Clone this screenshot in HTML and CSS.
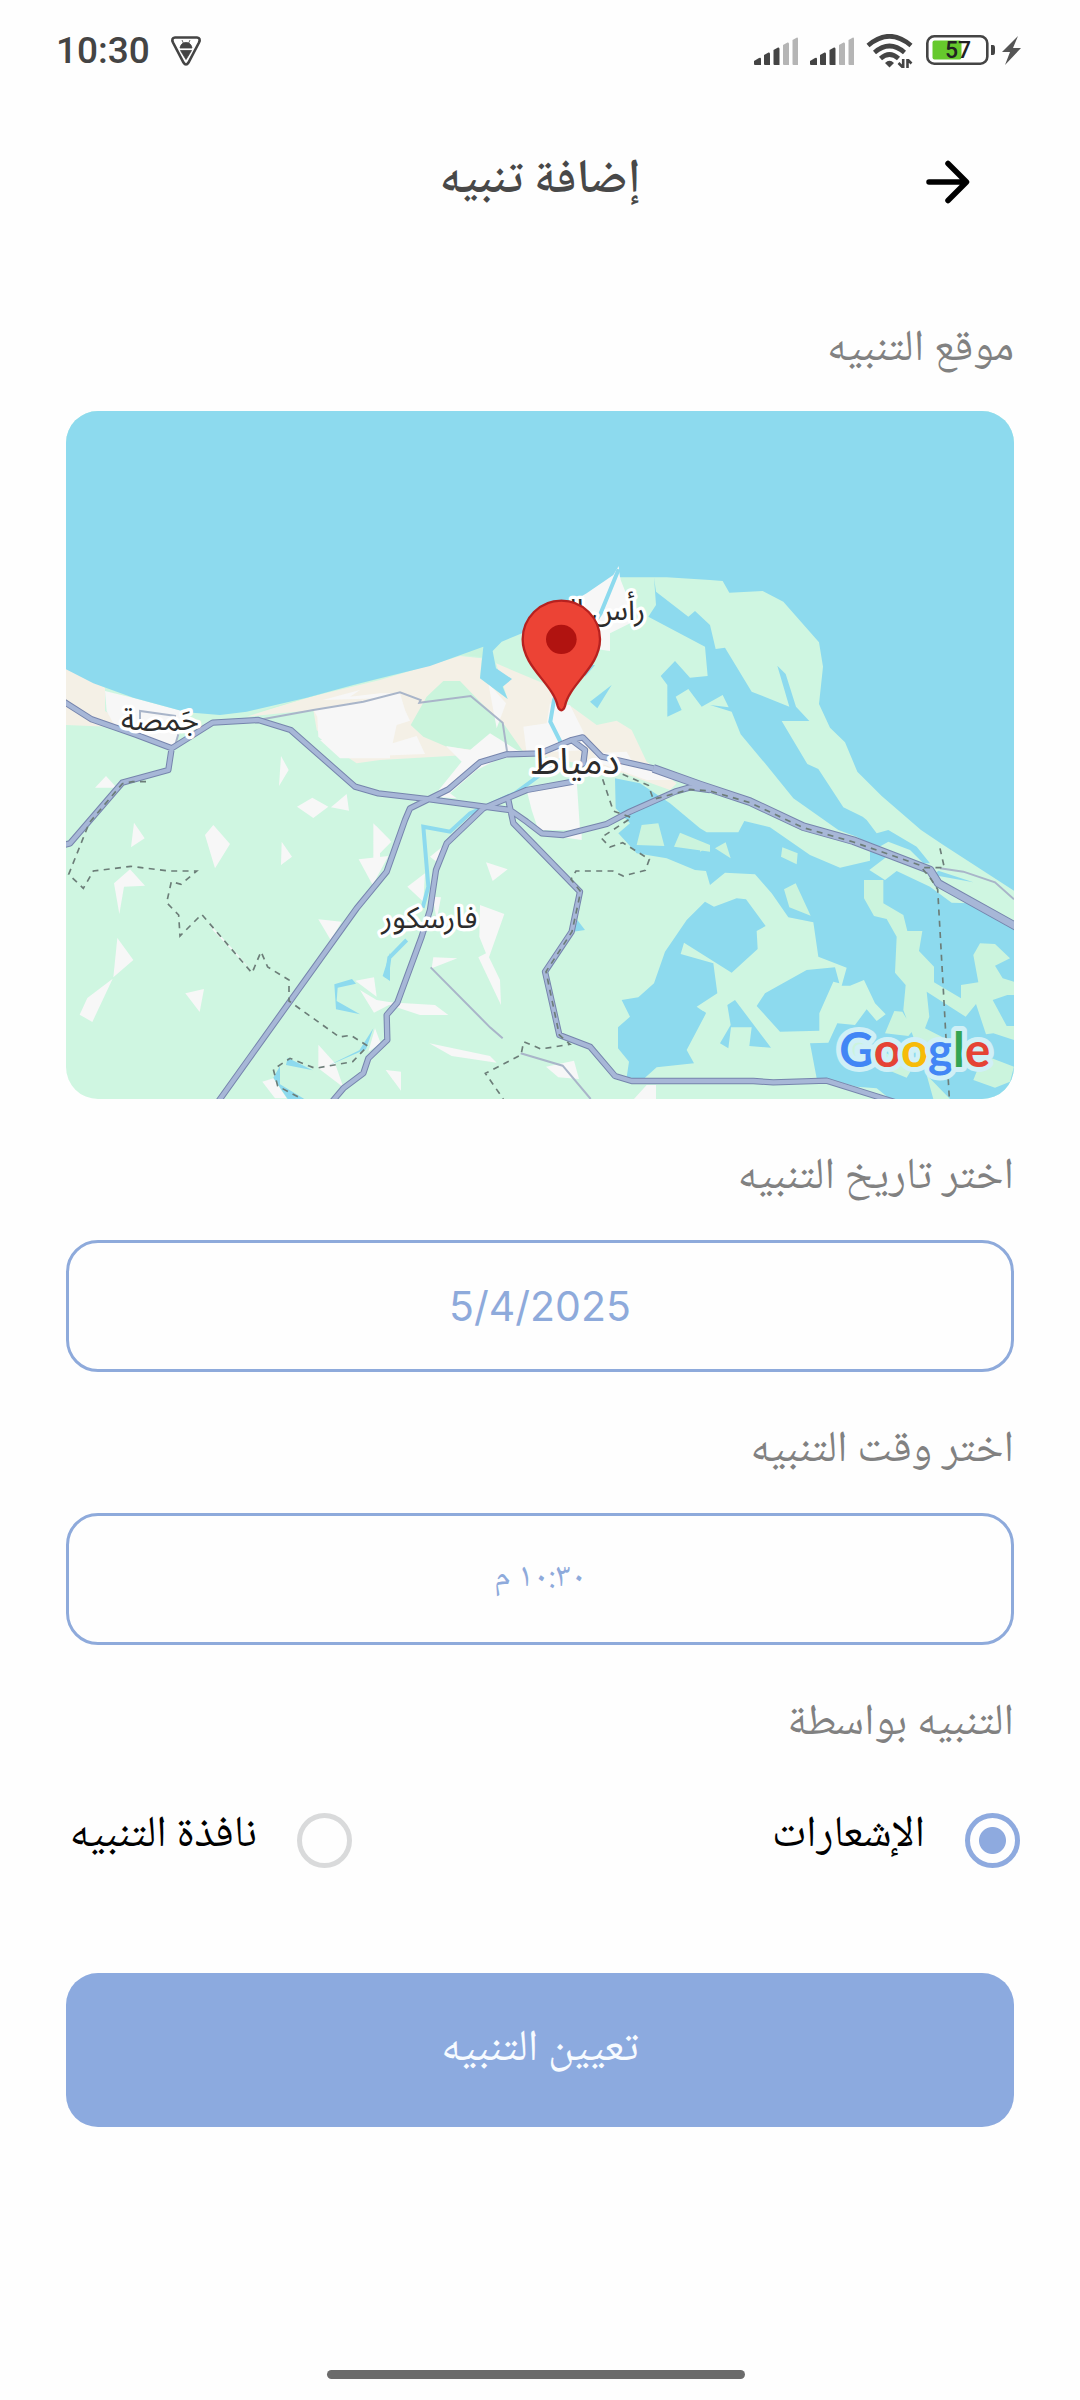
FILE: index.html
```html
<!DOCTYPE html>
<html lang="ar" dir="rtl">
<head>
<meta charset="utf-8">
<meta name="viewport" content="width=device-width, initial-scale=1">
<title>إضافة تنبيه</title>
<link rel="stylesheet" href="styles.css">
</head>
<body>
<div class="screen">
  <div class="status" dir="ltr">
    <div class="status-side">
      <span class="clock">10:30</span>
      <svg class="icon" width="32" height="32" viewBox="0 0 32 32" aria-hidden="true">
        <path d="M5 2.500H27Q31 3 29 7.500L18.500 27.500Q16 31.500 13.500 27.500L3 7.500Q1 3 5 2.500Z" fill="none" stroke="#444" stroke-width="2.600"/>
        <path d="M10 13Q11 7.500 16 7.500T22 13ZM12 5L13.500 8.500M20 5L18.500 8.500M10.500 15.500H21.500L16 24.500Z" fill="#444" stroke="#444" stroke-width=".8"/>
      </svg>
    </div>
    <div class="status-side">
      <svg class="icon" width="44" height="30" viewBox="0 0 44 30" aria-hidden="true">
        <g fill="#444"><path d="M0 25L5 22Q7 21 7 23V29H1Q0 29 0 28Z"/><path d="M10 19L14.500 16.500Q16 16 16 18V29H11Q10 29 10 28Z"/><path d="M19.500 14L24 11.500Q25.500 11 25.500 13V29H20.500Q19.500 29 19.500 28Z"/></g>
        <g fill="#b5b5b5"><path d="M29 9L33.500 6.500Q35 6 35 8V29H30Q29 29 29 28Z"/><path d="M38.500 4L43 1.500Q44 1 44 3V29H39.500Q38.500 29 38.500 28Z"/></g>
      </svg>
      <svg class="icon" width="44" height="30" viewBox="0 0 44 30" aria-hidden="true">
        <g fill="#444"><path d="M0 25L5 22Q7 21 7 23V29H1Q0 29 0 28Z"/><path d="M10 19L14.500 16.500Q16 16 16 18V29H11Q10 29 10 28Z"/><path d="M19.500 14L24 11.500Q25.500 11 25.500 13V29H20.500Q19.500 29 19.500 28Z"/></g>
        <g fill="#b5b5b5"><path d="M29 9L33.500 6.500Q35 6 35 8V29H30Q29 29 29 28Z"/><path d="M38.500 4L43 1.500Q44 1 44 3V29H39.500Q38.500 29 38.500 28Z"/></g>
      </svg>
      <svg class="icon" width="48" height="34" viewBox="0 0 48 34" aria-hidden="true">
        <g fill="none" stroke="#444" stroke-width="4.600"><path d="M2 11.500Q23.500-7 45 11.500"/><path d="M8.500 18.500Q23.500 5.500 38.500 18.500"/><path d="M14.500 24.500Q23.500 16.500 32.500 24.500"/></g>
        <path d="M19 29Q23.500 24.500 28 29L23.500 33.500Z" fill="#444"/>
        <path d="M37.200 25V34M41.500 25V34M36.500 33L32.500 29M42 26L45.500 29.500" stroke="#444" stroke-width="2.600"/>
      </svg>
      <svg class="icon" width="98" height="32" viewBox="0 0 98 32" aria-hidden="true">
        <rect x="6.500" y="5.500" width="29" height="19" rx="2" fill="#66c92c"/>
        <rect x="1.300" y="1.300" width="60" height="27.400" rx="7" fill="none" stroke="#444" stroke-width="2.600"/>
        <path d="M65 10H67Q69 10 69 13V17Q69 20 67 20H65Z" fill="#444"/>
        <text class="battery-text" x="19" y="23">57</text>
        <path d="M92 1L76 17H84L79 30L95 13H87Z" fill="#555"/>
      </svg>
    </div>
  </div>

  <header class="topbar">
    <button class="back" type="button" aria-label="رجوع">
      <svg class="icon" width="44" height="44" viewBox="0 0 44 44" aria-hidden="true"><path d="M3 22H39M22 3.500L40.500 22L22 40.500" fill="none" stroke="#000" stroke-width="5.500" stroke-linecap="round" stroke-linejoin="round"/></svg>
    </button>
    <h1 class="title">إضافة تنبيه</h1>
  </header>

  <form class="form">
    <h2 class="label label-first">موقع التنبيه</h2>
    <svg class="map" viewBox="0 0 2844 2064" preserveAspectRatio="xMidYMid slice" role="img" aria-label="خريطة دمياط" direction="ltr">
      <rect width="2844" height="2064" fill="#cff6e1"/>
      <!-- north-west coast: sand and built-up areas -->
      <path fill="#f4f0e6" d="M0 770L117 830V900L200 950L0 942Z"/>
      <path fill="#f7f7f7" d="M117 840L200 860L362 904L330 1000L317 1012L150 952L122 900Z"/>
      <g transform="translate(942 417)">
        <path fill="#f4f0e6" d="M-400 500L-220 443L0 390L240 318L305 325L300 385L383 447L348 340L490 400L530 450L575 470L650 525L710 512L755 540L800 635L890 700L870 720L730 670L430 605L0 630L-70 640L-130 600L-190 540L-200 480Z"/>
        <path fill="#caf4dc" d="M-400 497L-220 440L0 386L240 314L310 322V280L0 380Z"/>
        <path fill="#f7f7f7" d="M-172 450L-60 420L-90 440L0 430L60 430L75 480L90 512L50 525L38 580L110 558L135 612L0 617L-120 616L-185 560L-188 500L-200 480L0 445Z"/>
        <path fill="#caf4dc" d="M190 393H240L300 455L370 520L430 605L280 600L200 590L130 560L92 525L140 440Z"/>
        <path fill="#f7f7f7" d="M198 588L270 600L330 550L410 600L480 612L360 625L290 660L210 730L230 745L160 740L245 635ZM325 400L378 460L350 535ZM430 530L500 520L510 460L570 465L610 545L620 600L440 610ZM440 720L590 690L600 840H475L455 780ZM600 140L716 48L722 90L770 210L690 250V303L600 290ZM640 610L740 605L760 640L860 660L880 690L800 690L660 640Z"/>
      </g>
      <!-- fields -->
      <g transform="translate(-18 987)" fill="#f7f7f7">
        <path d="M105 143L138 108L170 143ZM222 248L254 295L213 322ZM460 255L510 312L465 385L435 285ZM663 48L686 90L657 138ZM711 200L757 173L805 200L760 234ZM813 202L860 162L867 212ZM665 305L696 350L663 375ZM948 258L990 300L955 335ZM896 358L985 348L938 435ZM162 430L210 388L255 437L192 440L178 522ZM172 594L220 660L160 712ZM158 716L97 846L59 824L82 774ZM376 760L432 747L419 816ZM775 538L845 545L812 600ZM445 548L530 640L572 690L460 572ZM886 722L942 712L950 770ZM900 750L950 780L1000 788L942 818ZM775 914L825 970L850 1042L775 985ZM607 1025L640 1015L680 1075H645ZM945 865L962 910L925 935ZM780 0H990V55H840ZM980 990L1000 1000V1020Z"/>
      </g>
      <g transform="translate(942 1227)" fill="#f7f7f7">
        <path d="M318 127L383 148L338 183ZM300 255L373 282L327 412L360 480L363 555L295 412L318 400L298 350ZM82 200L135 160L130 245ZM158 230L183 232L170 300ZM160 412L232 415L155 445ZM0 545L165 555L205 585H120ZM148 670L330 708L350 728L215 708ZM17 750L63 755V812ZM498 740L582 722L597 777L535 772ZM762 837L800 795H828V837ZM-20 10L34 65L0 100V150L-20 175ZM540 50L605 30V60ZM200 70L150 110L175 130Z"/>
      </g>
      <!-- sea -->
      <path fill="#8ddaee" d="M0 0H2844V1439L2632 1302L2565 1257L2447 1155L2374 1082L2337 994L2292 950L2259 879L2271 767L2259 694L2152 572L2090 540L1990 545L1970 510L1932 507L1802 499H1662L1658 465L1642 492L1562 547L1502 582L1372 665L1307 692L1280 720L1290 772L1338 804L1310 827L1325 864L1242 802L1252 707L1092 765L942 802L862 822L722 860L542 902L462 912L362 904L202 860L82 817L0 775Z"/>
      <!-- eastern lagoon -->
      <g transform="translate(1902 417)">
        <path fill="#8ddaee" d="M-138 82L-132 125L-35 200L-15 183L30 225L47 297L75 293L155 425L268 470L232 347L257 372L288 470L328 513H245L322 642L355 657L430 772L488 800L500 810L530 850L565 840L650 890L690 940L670 940L630 900L565 875L530 895L470 860L415 840L280 745L195 640L122 553L95 485L30 465L86 472L68 435L5 470L-35 417L-73 440L-55 480L-98 500V405L-118 378L-75 333L-30 383L23 378L15 290L-155 200L-132 165ZM-265 405L-308 475L-330 455ZM-315 345L-340 345L-345 380Z"/>
      </g>
      <!-- southern lagoon and its islands -->
      <g transform="translate(1902 1227)">
        <path fill="#8ddaee" d="M-255-125L-180-110L-90-50L0 25L20 37H115L133 3L210 22L330 105L420 143L510 122V90L560 110L508 150L555 180L590 153L690 200L755 248L810 250L942 325V837H570L530 805L470 800L380 775H350L330 670L385 668L412 610L465 615L500 568L530 603L557 583L525 550L492 480L450 497H425L440 443L355 410L340 307L265 292L215 220L165 163L75 158L30 195L18 153L-15 150L-100 115L-190 100L-245 40L-210 10L-253-35Z"/>
        <path fill="#8ddaee" d="M170 558L195 520L320 450L405 442L418 490L400 485L358 580V632L240 635ZM82 555L105 540L213 683L148 678L155 622H93L85 685L60 670L92 615ZM0 570L17 577L0 610L-15 580ZM715 152L820 187L700 165Z"/>
        <path fill="#8ddaee" d="M15 245L-40 300L-105 395L-138 490L-185 532L-235 540L-210 590L-246 622V685L-213 725L-220 772L-170 778L-130 742L-18 730L-40 690L18 580L-10 560L52 520L40 430L-58 402L-48 368L95 458L173 387L170 333L197 318L138 238L110 235L42 260ZM-368 300L-345 330L-380 335Z"/>
        <path fill="#cbf4dd" d="M492 180H550V250L610 285L622 333H667L657 393L702 440V487L783 535V495L835 487L820 405L840 370L885 372L930 415L885 437L908 475L942 485V525H922L878 540L920 618H942V660L880 640L858 643L828 552L797 590L680 515L688 590L675 625L725 650L745 690L700 680L640 700V650L610 570L617 495L585 458L590 350L560 297L522 288L492 235ZM583 573L607 575L640 630L625 648L555 640ZM247 82L293 100L290 133L243 110ZM287 190L332 287L268 262L252 208ZM45 85L77 67L92 115ZM0 68L27 80L0 95ZM850 705L942 740L930 785L885 803L820 780ZM680 765L750 837H700ZM440 650L520 680L640 740L620 773L540 740L460 710ZM-175 15L-125 10L-107 78L-190 75ZM-60 38L30 75V95L-78 80Z"/>
      </g>
      <!-- river and canals -->
      <g fill="none" stroke="#8ddaee" stroke-width="12">
        <path d="M1658 475L1604 607L1530 720L1464 867L1453 932L1487 1000L1497 1037L1347 1147L1212 1207L1152 1262L1072 1247L1087 1427L1070 1490M1022 1587L970 1640L962 1700"/>
      </g>
      <path fill="#8ddaee" d="M972 1625L950 1695L972 1710ZM805 1720L858 1704L870 1718L815 1730L812 1770L882 1810L810 1795ZM922 1852L900 1915L784 1965L880 1918ZM665 1940L740 1978L660 1962ZM642 1965V2020L715 2064H665L622 2000Z"/>
      <!-- minor roads -->
      <g fill="none" stroke="#a9b5c9" stroke-width="6">
        <path d="M577 927L742 897L892 872L1002 844L1064 867L1060 875L1214 855L1310 935L1324 1027M1094 1669L1272 1849L1310 1882M1364 1927L1490 1964L1574 2064M2622 1372L2692 1382L2787 1414L2844 1465M222 940V900L330 915M337 970L325 1010"/>
      </g>
      <!-- main roads: casing, then fill -->
      <g fill="none" stroke-linejoin="round">
        <path stroke="#7685ad" stroke-width="19" d="M-10 870L77 925L212 972L317 1012L440 935L577 927L674 957L867 1127L937 1147L1092 1165L1332 1197L1382 1232L1427 1267L1492 1272L1622 1239L1692 1202L1827 1142L1872 1129L1932 1137M317 1012L307 1077L169 1115L12 1297L-18 1305M453 2077L682 1757L872 1492L962 1382L1017 1227L1032 1192L1147 1135L1242 1054L1322 1030L1422 1027L1517 987L1550 979L1607 1037L1762 1072M1517 987L1557 1017L1552 1057L1530 1070M794 2077L832 2032L892 1987L907 1942L964 1887L962 1812L994 1775L1067 1577L1092 1497L1110 1377L1142 1297L1252 1192L1382 1137L1522 1112M1327 1167L1342 1237L1542 1442L1517 1562L1437 1682L1480 1872L1572 1907L1647 1995L1697 2010H2062L2122 2014L2282 2009L2492 2075"/>
        <path stroke="#7685ad" stroke-width="26" d="M1762 1072L1902 1122L2052 1172L2212 1247L2362 1289L2592 1377L2617 1417L2860 1552"/>
        <path stroke="#a7b7d7" stroke-width="13" d="M-10 870L77 925L212 972L317 1012L440 935L577 927L674 957L867 1127L937 1147L1092 1165L1332 1197L1382 1232L1427 1267L1492 1272L1622 1239L1692 1202L1827 1142L1872 1129L1932 1137M317 1012L307 1077L169 1115L12 1297L-18 1305M453 2077L682 1757L872 1492L962 1382L1017 1227L1032 1192L1147 1135L1242 1054L1322 1030L1422 1027L1517 987L1550 979L1607 1037L1762 1072M1517 987L1557 1017L1552 1057L1530 1070M794 2077L832 2032L892 1987L907 1942L964 1887L962 1812L994 1775L1067 1577L1092 1497L1110 1377L1142 1297L1252 1192L1382 1137L1522 1112M1327 1167L1342 1237L1542 1442L1517 1562L1437 1682L1480 1872L1572 1907L1647 1995L1697 2010H2062L2122 2014L2282 2009L2492 2075"/>
        <path stroke="#a7b7d7" stroke-width="20" d="M1762 1072L1902 1122L2052 1172L2212 1247L2362 1289L2592 1377L2617 1417L2860 1552"/>
      </g>
      <!-- boundaries -->
      <g fill="none" stroke="#6c7d78" stroke-width="5" stroke-dasharray="18 16">
        <path d="M240 1112H200L169 1118L70 1235L8 1390L52 1432L82 1380L195 1366L310 1380H392L345 1420L316 1412L302 1475L338 1512L342 1575L407 1510L558 1686L585 1622L605 1668L669 1707V1770L820 1878L855 1873L905 1905L860 1952L748 1972L672 1942L622 1975L635 2025L710 2065"/>
        <path d="M1670 1090L1747 1123L1762 1165L1872 1135L1932 1140L2052 1175L2212 1250L2362 1293L2560 1362L2592 1400L2615 1435L2630 1700L2650 2064M1610 1105L1642 1200L1697 1220L1605 1280L1632 1308L1670 1295L1750 1345L1738 1378L1672 1395L1640 1380H1530L1515 1405L1544 1442L1518 1562L1440 1682L1480 1872L1512 1900L1425 1914L1373 1892L1365 1932L1258 1987L1312 2064M2622 1312L2635 1370H2560"/>
      </g>
      <g class="map-label">
        <text x="282" y="957">جَمصة</text>
        <text x="1590" y="627">رأس البر</text>
        <text class="map-city" x="1528" y="1088">دمياط</text>
        <text x="1090" y="1552">فارسكور</text>
      </g>
      <!-- marker -->
      <path d="M1486 898Q1479 898 1475 885C1463 820 1370 768 1370 685A116 116 0 0 1 1602 685C1602 768 1509 820 1497 885Q1493 898 1486 898Z" fill="#ec4335" stroke="#b7211f" stroke-width="7"/>
      <ellipse cx="1486" cy="685" rx="46" ry="44" fill="#b11310"/>
      <text class="brand" x="2320" y="1967"><tspan fill="#4286f5">G</tspan><tspan fill="#e54335">o</tspan><tspan fill="#f7bb08">o</tspan><tspan fill="#4286f5">g</tspan><tspan fill="#34a553">l</tspan><tspan fill="#e54335">e</tspan></text>
    </svg>

    <label class="label" for="date">اختر تاريخ التنبيه</label>
    <input class="field" id="date" type="text" value="5/4/2025" readonly dir="ltr">

    <label class="label" for="time">اختر وقت التنبيه</label>
    <input class="field field-time" id="time" type="text" value="١٠:٣٠ م" readonly>

    <fieldset class="choices">
      <legend class="label">التنبيه بواسطة</legend>
      <div class="choice-row">
        <label class="choice"><input class="radio" type="radio" name="via" checked><span class="choice-text">الإشعارات</span></label>
        <label class="choice"><input class="radio" type="radio" name="via"><span class="choice-text">نافذة التنبيه</span></label>
      </div>
    </fieldset>

    <button class="submit" type="button">تعيين التنبيه</button>
  </form>

  <div class="home-bar"></div>
</div>
</body>
</html>
```
FILE: styles.css
```css
* { box-sizing: border-box; }

body {
  margin: 0;
  background: #fefefe;
  color: #000;
  font-family: "Noto Naskh Arabic", "Noto Sans Arabic", "Noto Sans", "DejaVu Sans", sans-serif;
}

.screen {
  display: flex;
  flex-direction: column;
  min-height: 100vh;
}

.icon { display: block; flex: none; }

.status {
  display: flex;
  justify-content: space-between;
  align-items: center;
  height: 102px;
  padding: 0 56px;
}

.status-side { display: flex; align-items: center; gap: 12px; }
.status-side:first-child { gap: 20px; }

.clock {
  font: 500 37px/48px Roboto, sans-serif;
  color: #444;
}

.battery-text {
  font: 500 23px Roboto, sans-serif;
  fill: #222;
}

.topbar {
  display: grid;
  grid-template-columns: 1fr auto 1fr;
  align-items: center;
  height: 160px;
  padding: 0 110px;
}

.back {
  justify-self: start;
  padding: 0;
  border: 0;
  background: none;
}

.title {
  margin: 0;
  font-size: 48px;
  line-height: 68px;
  font-weight: 600;
  color: #484848;
}

.form {
  display: flex;
  flex-direction: column;
  padding: 47px 66px 0;
}

.label {
  display: block;
  height: 141px;
  margin: 0;
  padding: 40px 0 0;
  font-size: 44px;
  line-height: 80px;
  font-weight: 400;
  color: #818181;
}

.label-first { height: 102px; padding-top: 2px; }

.map {
  display: block;
  width: 100%;
  aspect-ratio: 948 / 688;
  border-radius: 32px;
}

.map-label {
  font: 90px "Noto Sans Arabic", "Noto Sans", "DejaVu Sans", sans-serif;
  text-anchor: middle;
  fill: #2c2c2c;
  stroke: #fff;
  stroke-width: 20px;
  stroke-linejoin: round;
  paint-order: stroke;
}

.map-city { font-size: 108px; }

.brand {
  font: 700 142px Lato, sans-serif;
  stroke: #d0f0f6;
  stroke-width: 30px;
  stroke-linejoin: round;
  paint-order: stroke;
}

.field {
  width: 100%;
  height: 132px;
  padding: 0;
  border: 3px solid #8eaadb;
  border-radius: 32px;
  background: none;
  color: #8eaadb;
  text-align: center;
  font: 41px Inter, sans-serif;
}

.field-time {
  font-family: "Noto Naskh Arabic", "Noto Sans", "DejaVu Sans", sans-serif;
  font-size: 34px;
}

.choices { margin: 0; padding: 0; border: 0; min-width: 0; }

.choice-row {
  display: grid;
  grid-template-columns: 1fr 286px;
  margin-right: -6px;
}

.choice { display: flex; align-items: center; gap: 40px; height: 108px; }

.radio {
  appearance: none;
  flex: none;
  width: 55px;
  height: 55px;
  margin: 0;
  border: 5px solid #d9dadb;
  border-radius: 50%;
}

.radio:checked {
  border-color: #8eaadf;
  background: radial-gradient(circle, #8eaadf 13px, transparent 14px);
}

.choice-text { font-size: 44px; line-height: 60px; padding-bottom: 6px; white-space: nowrap; }

.submit {
  height: 154px;
  margin-top: 79px;
  border: 0;
  border-radius: 32px;
  background: #8caadf;
  color: #f7fbff;
  font: inherit;
  font-size: 44px;
}

.home-bar {
  align-self: center;
  width: 418px;
  height: 9px;
  margin: auto 8px 21px 0;
  border-radius: 5px;
  background: #6b6b6b;
}
```
